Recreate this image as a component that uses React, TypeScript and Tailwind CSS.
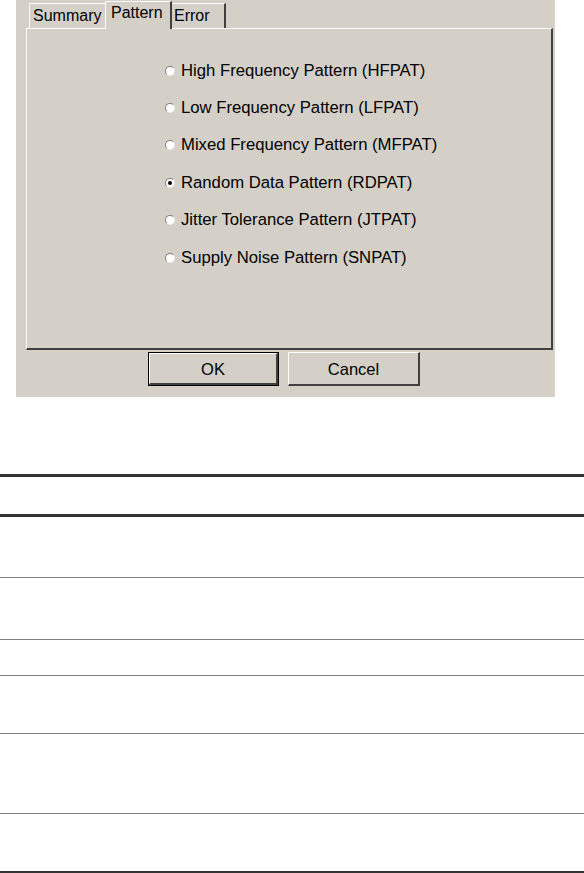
import React from "react";

const options = [
  { label: "High Frequency Pattern (HFPAT)", checked: false },
  { label: "Low Frequency Pattern (LFPAT)", checked: false },
  { label: "Mixed Frequency Pattern (MFPAT)", checked: false },
  { label: "Random Data Pattern (RDPAT)", checked: true },
  { label: "Jitter Tolerance Pattern (JTPAT)", checked: false },
  { label: "Supply Noise Pattern (SNPAT)", checked: false },
];

function Radio({ checked }: { checked: boolean }) {
  return (
    <span className="relative flex h-[10px] w-[10px] shrink-0 items-center justify-center rounded-full border border-t-[#808080] border-l-[#808080] border-r-[#e8e8e8] border-b-[#e8e8e8] bg-white">
      {checked && <span className="h-[4px] w-[4px] rounded-full bg-black" />}
    </span>
  );
}

function Tab({ label, selected, width }: { label: string; selected?: boolean; width: string }) {
  if (selected) {
    return (
      <div
        className={`relative z-10 -mb-[1px] -mx-[2px] flex h-[28px] ${width} items-start border-l border-t border-white border-r-2 border-r-[#404040] bg-[#d4d0c8] pl-[5px] pt-[2px] rounded-tl-[2px]`}
      >
        {label}
      </div>
    );
  }
  return (
    <div
      className={`flex h-[25px] ${width} items-start border-l border-t border-white border-r-2 border-r-[#404040] bg-[#d4d0c8] pl-[3px] pt-[3px] rounded-tl-[2px]`}
    >
      {label}
    </div>
  );
}

export default function App() {
  return (
    <div
      className="relative h-[873px] w-[584px] overflow-hidden bg-white text-black"
      style={{ fontFamily: '"Liberation Sans", Arial, sans-serif' }}
    >
      <div className="ml-[16px] flex h-[397px] w-[539px] flex-col bg-[#d4d0c8] text-[16px] leading-[18px]">
        <div className="flex h-[28px] items-end pl-[13px]">
          <Tab label="Summary" width="w-[78px]" />
          <Tab label="Pattern" selected width="w-[67px]" />
          <Tab label="Error" width="w-[56px]" />
        </div>
        <div className="ml-[10px] mr-[2px] h-[322px] border-l border-t border-white border-r-2 border-b-2 border-r-[#404040] border-b-[#404040]">
          <div className="flex flex-col pl-[138px] pt-[23px] text-[16.7px]">
            {options.map((o) => (
              <div key={o.label} className="flex h-[37.4px] items-center gap-[6px]">
                <Radio checked={o.checked} />
                <span>{o.label}</span>
              </div>
            ))}
          </div>
        </div>
        <div className="mt-[2px] flex gap-[9px] pl-[132px] text-[16.5px]">
          <button className="flex h-[34px] w-[131px] items-center justify-center border border-black bg-[#d4d0c8]">
            <span className="flex h-full w-full items-center justify-center border-l border-t border-white border-r-2 border-b-2 border-r-[#404040] border-b-[#404040]">
              OK
            </span>
          </button>
          <button className="flex h-[34px] w-[132px] items-center justify-center border-l border-t border-white border-r-2 border-b-2 border-r-[#404040] border-b-[#404040] bg-[#d4d0c8]">
            Cancel
          </button>
        </div>
      </div>

      <div className="mt-[77px] flex flex-col">
        <div className="h-[43px] border-y-[3px] border-[#333333]" />
        <div className="h-[61px] border-b border-[#808080]" />
        <div className="h-[62px] border-b border-[#808080]" />
        <div className="h-[36px] border-b border-[#808080]" />
        <div className="h-[58px] border-b border-[#808080]" />
        <div className="h-[80px] border-b border-[#808080]" />
        <div className="h-[60px] border-b-[3px] border-[#333333]" />
      </div>
    </div>
  );
}
